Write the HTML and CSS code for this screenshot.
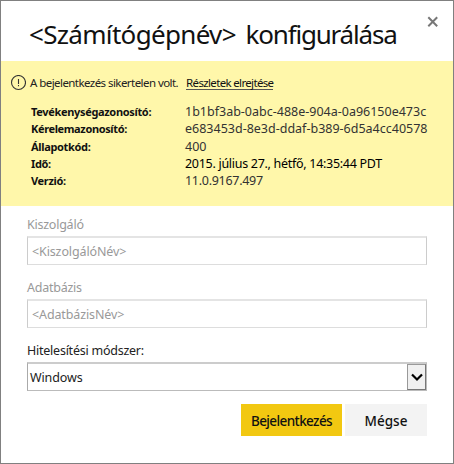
FILE: index.html
```html
<!DOCTYPE html>
<html lang="hu">
<head>
<meta charset="utf-8">
<title>Konfigurálás</title>
<link rel="stylesheet" href="styles.css">
</head>
<body>
<main class="dialog">
  <header class="header">
    <h1 class="title"><span class="t-name">&lt;Számítógépnév&gt;</span> <span class="t-verb">konfigurálása</span></h1>
    <button class="close" aria-label="Bezárás"><svg width="12" height="12" viewBox="0 0 12 12"><path d="M1.3 1.3 10.2 10.2M10.2 1.3 1.3 10.2"/></svg></button>
  </header>
  <section class="alert">
    <div class="summary">
      <svg class="warn" width="16" height="16" viewBox="0 0 16 16"><circle cx="8.5" cy="7.5" r="7"/><path d="M8.5 4V9M8.5 10V11.2"/></svg>
      <span class="message">A bejelentkezés sikertelen volt.</span>
      <a class="toggle"><span class="toggle-text">Részletek elrejtése</span></a>
    </div>
    <dl class="details">
      <dt><span class="k1">Tevékenységazonosító:</span></dt><dd>1b1bf3ab-0abc-488e-904a-0a96150e473c</dd>
      <dt><span class="k2">Kérelemazonosító:</span></dt><dd>e683453d-8e3d-ddaf-b389-6d5a4cc40578</dd>
      <dt><span class="k3">Állapotkód:</span></dt><dd>400</dd>
      <dt><span class="k4">Idő:</span></dt><dd class="dark"><span class="v4">2015. július 27., hétfő, 14:35:44 PDT</span></dd>
      <dt><span class="k5">Verzió:</span></dt><dd><span class="v5">11.0.9167.497</span></dd>
    </dl>
  </section>
  <form class="form">
    <label class="label muted">Kiszolgáló</label>
    <div class="field muted"><span class="f1">&lt;KiszolgálóNév&gt;</span></div>
    <label class="label muted">Adatbázis</label>
    <div class="field muted"><span class="f2">&lt;AdatbázisNév&gt;</span></div>
    <label class="label">Hitelesítési módszer:</label>
    <div class="field select"><span class="f3">Windows</span><span class="arrow"><svg width="12" height="9" viewBox="0 0 12 9"><path d="M1 1.5 6 6.5 11 1.5"/></svg></span></div>
    <div class="actions">
      <button type="button" class="btn primary"><span class="b1">Bejelentkezés</span></button>
      <button type="button" class="btn">Mégse</button>
    </div>
  </form>
</main>
</body>
</html>
```

FILE: styles.css
```css
* { box-sizing: border-box; }
body { margin: 0; font-family: "Noto Sans", "Open Sans", sans-serif; font-size: 12.5px; color: #222; }
span { white-space: nowrap; }
button { border: 0; padding: 0; font: inherit; background: none; }
.dialog { width: 454px; height: 464px; border: 1px solid #808080; background: #fff; }
.header { height: 60px; display: flex; justify-content: space-between; padding: 0 14px 0 28px; }
.title { margin: 14px 0 0; font-size: 26px; font-weight: 400; line-height: 38px; color: #111; white-space: nowrap; word-spacing: 3px; }
.t-name { letter-spacing: -0.68px; }
.t-verb { letter-spacing: -1.2px; }
.close { width: 12px; height: 12px; margin-top: 15px; }
.close svg { display: block; fill: none; stroke: #777; stroke-width: 2; }
.alert { height: 145px; background: #fff7aa; padding: 13px 0 0 9px; }
.summary { display: flex; align-items: center; height: 17px; font-size: 11.5px; }
.warn { margin-right: 4px; fill: none; stroke: #333; stroke-width: 1.1; }
.message { letter-spacing: -0.56px; }
.toggle { margin-left: 8px; color: #111; border-bottom: 1px solid #555; line-height: 14px; height: 14px; }
.toggle-text { letter-spacing: -0.66px; }
.details { display: grid; grid-template-columns: 154px 1fr; grid-auto-rows: 17.25px; margin: 12px 0 0 21px; line-height: 17px; }
dt { font-weight: 700; font-size: 11px; color: #111; letter-spacing: -0.33px; }
.k2 { letter-spacing: -0.37px; }
dd { margin: 0; color: #333; }
.dark { color: #000; }
.v4, .v5 { letter-spacing: -0.29px; }
.form { padding: 9px 26px 0; }
.label { display: block; height: 20px; line-height: 20px; margin-bottom: 1px; letter-spacing: -0.24px; }
.muted { color: #999; }
.field { height: 29px; margin-bottom: 13px; border: 1px solid #ccc; border-top: 2px solid #e4e4e4; border-bottom-color: #ddd; padding-left: 4px; line-height: 27px; display: flex; }
.field span { letter-spacing: -0.12px; }
.select { border-color: #ccc #bbb #bbb #aaa; padding-left: 2px; justify-content: space-between; margin-bottom: 13px; }
.arrow { width: 19px; border: 1px solid #999; border-right-color: #777; border-bottom-color: #777; background: #f0f0f0; display: flex; align-items: center; justify-content: center; }
.arrow svg { fill: none; stroke: #000; stroke-width: 2.2; }
.actions { display: flex; justify-content: flex-end; gap: 3px; margin-top: -1px; }
.btn { width: 82px; height: 32px; background: #f3f3f3; font-size: 13.5px; font-weight: 500; color: #111; padding-top: 2px; }
.primary { width: 101px; background: #f2c811; }
.b1 { letter-spacing: -0.6px; }
.field { max-height: 29px; }
.select { height: 29px; }
.actions { padding-top: 1px; }
```
